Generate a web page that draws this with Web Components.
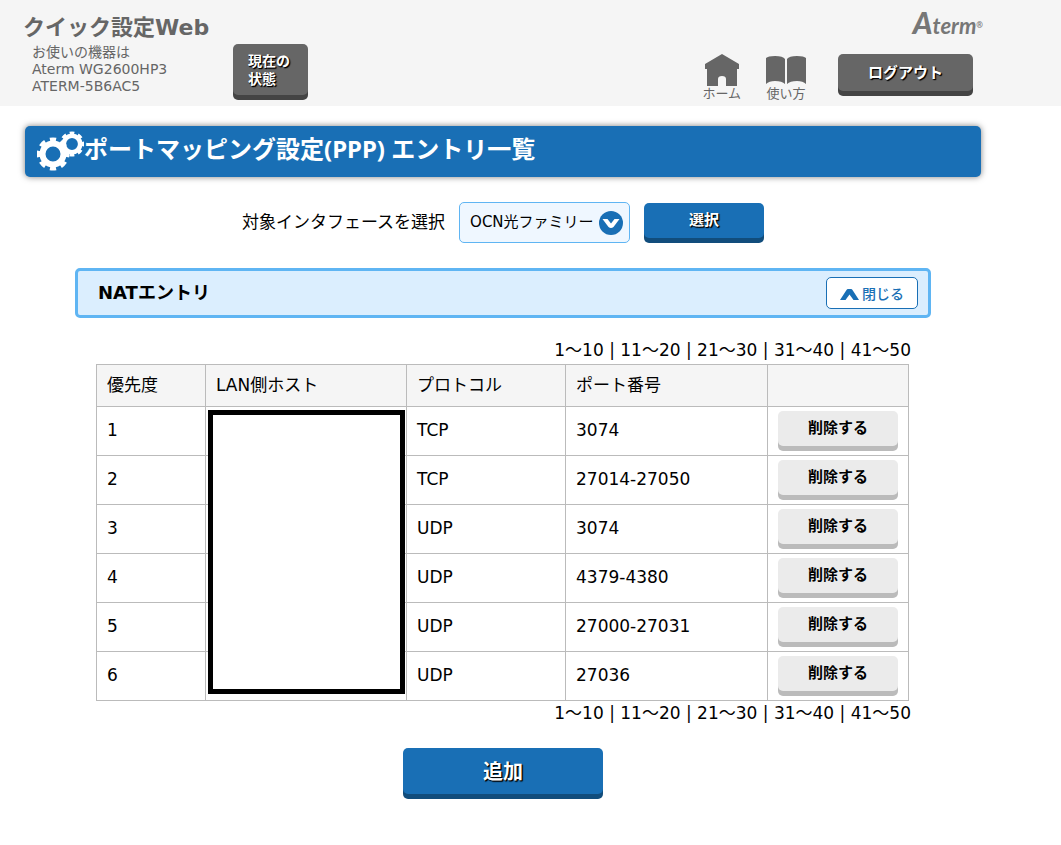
<!DOCTYPE html>
<html lang="ja">
<head>
<meta charset="utf-8">
<title>クイック設定Web</title>
<style>
body { margin: 0; background: #fff; color: #000; font: 17px/24px "DejaVu Sans", "Noto Sans CJK JP", sans-serif; }
</style>
</head>
<body>
<router-page></router-page>

<template id="t-button">
<style>
:host { display: block; width: 120px; --face: #196fb5; --edge: #114d7c; }
:host([tone="gray"]) { --face: #666; --edge: #444; }
:host([tone="light"]) { --face: #ebebeb; --edge: #bbb; }
button { display: block; box-sizing: border-box; width: 100%; height: 35px; margin: 0 0 5px; padding: 0 15px 2px; border: 0; border-radius: 5px;
  background: var(--face); box-shadow: 0 5px 0 var(--edge); color: #fff; font: bold 15px/18px "DejaVu Sans", "Noto Sans CJK JP", sans-serif;
  text-shadow: 1px 1px 1px #000, 1px 1px 1px #000; cursor: pointer; }
:host([tone="light"]) button { color: #000; text-shadow: none; }
:host([size="state"]) { width: 75px; }
:host([size="state"]) button { height: 51px; padding-bottom: 0; text-align: left; font-size: 14px; }
:host([size="logout"]) { width: 135px; }
:host([size="logout"]) button { height: 37px; padding-bottom: 0; }
:host([size="large"]) { width: 200px; }
:host([size="large"]) button { height: 46px; padding: 2px 15px 0; font-size: 20px; line-height: 24px; }
</style>
<button type="button"><slot></slot></button>
</template>

<template id="t-navlink">
<style>
:host { display: block; }
a { display: flex; flex-direction: column; align-items: center; color: #666; font-size: 13px; line-height: 16px; text-decoration: none; }
</style>
<a href="#"><slot name="icon"></slot><slot></slot></a>
</template>

<template id="t-logo">
<style>
:host { display: block; color: #777; font: italic 700 22px/28px "Open Sans", sans-serif; text-align: right; }
.cap { font-family: Lato, sans-serif; font-size: 30px; font-weight: 900; }
.term { font-family: Lato, sans-serif; font-weight: 700; }
.reg { font-size: 8px; vertical-align: 6px; }
</style>
<span class="cap">A</span><span class="term">term</span><span class="reg">®</span>
</template>

<template id="t-header">
<style>
:host { display: block; background: #f5f5f5; color: #666; }
header { display: flex; box-sizing: border-box; min-height: 106px; padding: 0 78px 0 23px; }
h1 { margin: 14px 0 0; font-size: 22px; line-height: 28px; }
p { margin: 2px 0 0 9px; font-size: 14px; line-height: 17px; }
.id { width: 210px; }
.state { padding-top: 44px; }
.right { margin-left: auto; }
nav { display: flex; align-items: flex-start; margin: 18px 10px 0 0; }
.home { margin: 0 25px 0 0; }
.book { margin: 0 32px 0 0; }
svg { display: block; fill: #666; }
aterm-logo { height: 28px; padding-top: 8px; }
</style>
<header>
  <div class="id">
    <h1>クイック設定Web</h1>
    <p>お使いの機器は<br>Aterm WG2600HP3<br>ATERM-5B6AC5</p>
  </div>
  <div class="state"><aterm-button tone="gray" size="state">現在の<br>状態</aterm-button></div>
  <div class="right">
    <aterm-logo></aterm-logo>
    <nav>
      <nav-link class="home"><svg slot="icon" width="34" height="32" viewBox="0 0 34 32"><path d="M17 0 34 10V15H32V32H21V25Q21 22 17 22T13 25V32H2V15H0V10Z"/></svg>ホーム</nav-link>
      <nav-link class="book"><svg slot="icon" width="40" height="32" viewBox="0 0 40 32"><path d="M0 4Q2 2 9 2 17 2 19 5V30Q16 27 9 27 3 27 0 30ZM21 5Q23 2 31 2 38 2 40 4V30Q37 27 31 27 24 27 21 30Z"/></svg>使い方</nav-link>
      <aterm-button tone="gray" size="logout">ログアウト</aterm-button>
    </nav>
  </div>
</header>
</template>

<template id="t-title">
<style>
:host { display: block; }
h2 { display: flex; align-items: flex-start; margin: 0; height: 51px; padding-left: 12px; border-radius: 5px; background: #196fb5; color: #fff;
  box-shadow: 0 0 6px rgba(0,0,0,.5); font: bold 24px/46px "Noto Sans", "Noto Sans CJK JP", sans-serif; }
svg { flex: none; margin-top: 5px; fill: none; stroke: #fff; }
</style>
<h2><svg width="47" height="40" viewBox="0 0 47 40">
  <circle cx="16" cy="23" r="10.5" stroke-width="6"/>
  <circle cx="16" cy="23" r="14" stroke-width="5" pathLength="16" stroke-dasharray="1.1 .9" stroke-dashoffset=".55"/>
  <circle cx="35" cy="13" r="8.2" stroke-width="4.6"/>
  <circle cx="35" cy="13" r="10.4" stroke-width="4" pathLength="16" stroke-dasharray="1.1 .9" stroke-dashoffset=".55"/>
</svg><span><slot></slot></span></h2>
</template>

<template id="t-picker">
<style>
:host { display: block; }
form { display: flex; justify-content: center; align-items: flex-start; gap: 14px; }
label { line-height: 38px; }
.box { position: relative; width: 171px; margin-top: -1px; }
select { appearance: none; display: block; box-sizing: border-box; width: 100%; height: 41px; margin: 0; padding: 0 35px 2px 10px; border: 1px solid #5fb5f3; border-radius: 5px;
  background: #eff7ff; color: #000; font: 15px/24px "DejaVu Sans", "Noto Sans CJK JP", sans-serif; }
svg { position: absolute; right: 7px; top: 9px; pointer-events: none; }
</style>
<form>
  <label for="iface">対象インタフェースを選択</label>
  <span class="box"><select id="iface"><option>OCN光ファミリー</option></select>
    <svg width="24" height="24" viewBox="0 0 24 24"><circle cx="12" cy="12" r="12" fill="#196fb5"/><path d="M3.5 8H8.500L12 12.500 15.500 8H20.500L14.500 16Q12 18 9.500 16Z" fill="#fff"/></svg></span>
  <aterm-button>選択</aterm-button>
</form>
</template>

<template id="t-section">
<style>
:host { display: block; }
.bar { display: flex; align-items: center; justify-content: space-between; box-sizing: border-box; height: 50px; padding: 0 10px 0 20px; border: 3px solid #5fb5f3; border-radius: 5px; background: #dbeefe; }
h3 { margin: 0; font-size: 18px; line-height: 24px; }
button { display: flex; align-items: center; justify-content: center; gap: 3px; box-sizing: border-box; width: 92px; height: 32px; padding: 0; border: 1px solid #196fb5; border-radius: 5px;
  background: #fff; color: #196fb5; font: 500 14px/20px "Noto Sans CJK JP", sans-serif; }
button svg { margin-top: 3px; }
button span { padding-bottom: 1px; }
.body { padding: 20px 20px 0 21px; }
</style>
<section>
  <div class="bar"><h3><slot name="heading"></slot></h3>
    <button type="button"><svg width="19" height="11" viewBox="0 0 19 11"><path d="M0 11 6.500 1Q7 0 8 0H11Q12 0 12.500 1L19 11H13.500L9.500 5.500 5.500 11Z" fill="#196fb5"/></svg><span>閉じる</span></button></div>
  <div class="body"><slot></slot></div>
</section>
</template>

<template id="t-pager">
<style>
:host { display: block; text-align: right; }
a { color: inherit; text-decoration: none; }
</style>
<nav><a href="#1">1～10</a> | <a href="#11">11～20</a> | <a href="#21">21～30</a> | <a href="#31">31～40</a> | <a href="#41">41～50</a></nav>
</template>

<template id="t-table">
<style>
:host { display: block; margin: 2px 2px 0 0; }
table { width: 100%; table-layout: fixed; border-collapse: collapse; }
th, td { box-sizing: border-box; border: 1px solid #bbb; padding: 0 10px; text-align: left; font-weight: 400; }
th { height: 42px; padding-bottom: 2px; background: #f5f5f5; }
td { height: 49px; padding-bottom: 2px; }
td.act { padding: 0 10px; }
.c1 { width: 109px; } .c2 { width: 201px; } .c3 { width: 159px; } .c4 { width: 202px; } .c5 { width: 141px; }
td.host { position: relative; }
.mask { position: absolute; z-index: 1; left: 2px; right: 1px; top: 3px; box-sizing: border-box; height: 284px; border: 5px solid #000; background: #fff; }
</style>
<table>
  <colgroup><col class="c1"><col class="c2"><col class="c3"><col class="c4"><col class="c5"></colgroup>
  <thead><tr><th>優先度</th><th>LAN側ホスト</th><th>プロトコル</th><th>ポート番号</th><th></th></tr></thead>
  <tbody></tbody>
</table>
</template>

<template id="t-page">
<style>
:host { display: block; }
main { padding: 20px 80px 46px 25px; }
interface-picker { margin-top: 26px; }
entry-section { margin: 25px 50px 0; }
.add { margin: 23px auto 0; }
</style>
<site-header></site-header>
<main>
  <page-title>ポートマッピング設定(PPP) エントリ一覧</page-title>
  <interface-picker></interface-picker>
  <entry-section><span slot="heading">NATエントリ</span>
    <range-pager></range-pager>
    <port-table></port-table>
    <range-pager></range-pager>
  </entry-section>
  <aterm-button class="add" size="large">追加</aterm-button>
</main>
</template>

<script>
class TemplateElement extends HTMLElement {
  constructor() {
    super();
    this.attachShadow({ mode: "open" }).append(document.getElementById(this.constructor.template).content.cloneNode(true));
  }
}
const define = (name, template) => customElements.define(name, class extends TemplateElement { static template = template; });

define("aterm-button", "t-button");
define("nav-link", "t-navlink");
define("aterm-logo", "t-logo");
define("site-header", "t-header");
define("page-title", "t-title");
define("interface-picker", "t-picker");
define("entry-section", "t-section");
define("range-pager", "t-pager");

const entries = [["TCP", "3074"], ["TCP", "27014-27050"], ["UDP", "3074"], ["UDP", "4379-4380"], ["UDP", "27000-27031"], ["UDP", "27036"]];
customElements.define("port-table", class extends TemplateElement {
  static template = "t-table";
  connectedCallback() {
    this.shadowRoot.querySelector("tbody").innerHTML = entries.map(([protocol, port], i) =>
      `<tr><td>${i + 1}</td><td${i ? "" : ' class="host"'}>${i ? "" : '<div class="mask"></div>'}</td><td>${protocol}</td><td>${port}</td><td class="act"><aterm-button tone="light">削除する</aterm-button></td></tr>`).join("");
  }
});
define("router-page", "t-page");
</script>
</body>
</html>
